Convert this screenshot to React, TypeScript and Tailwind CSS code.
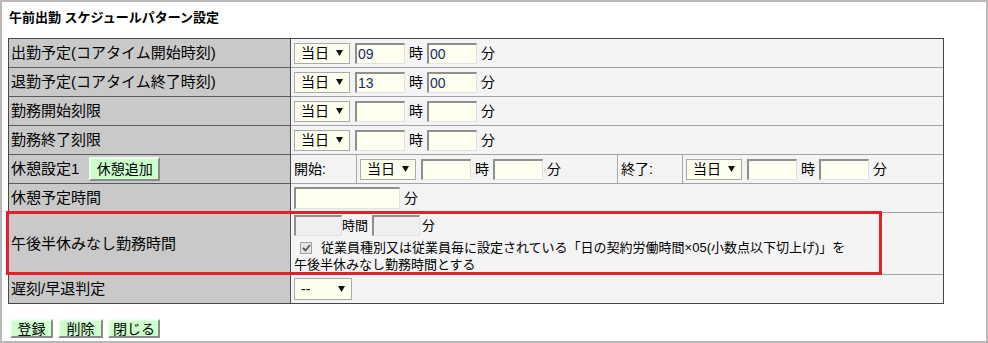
import React from 'react';

// Annotated settings form: "午前出勤 スケジュールパターン設定"

const Arrow = () => (
  <svg width="7" height="6" viewBox="0 0 7 6" className="shrink-0">
    <polygon points="0,0 7,0 3.5,6" fill="#111" />
  </svg>
);

const Sel = ({ text, className = '' }: { text: string; className?: string }) => (
  <div
    className={`flex items-center justify-between h-[21px] border border-[#a9a9a9] bg-[#fefeec] pl-[6px] pr-[6px] text-[14px] leading-[18px] text-black ${className}`}
  >
    <span>{text}</span>
    <Arrow />
  </div>
);

const Inp = ({
  value = '',
  className = '',
  disabled = false,
}: {
  value?: string;
  className?: string;
  disabled?: boolean;
}) => (
  <input
    readOnly
    value={value}
    className={`h-[21px] border-t-2 border-l-2 border-r border-b border-t-[#8f8f8f] border-l-[#8f8f8f] border-r-[#e2e2e2] border-b-[#e2e2e2] pl-[1px] text-[14px] leading-[17px] text-[#1b2a66] outline-none font-['Liberation_Sans',sans-serif] ${
      disabled ? 'bg-[#efefef]' : 'bg-[#fffff0]'
    } ${className}`}
  />
);

const GreenBtn = ({ text, className = '' }: { text: string; className?: string }) => (
  <button
    className={`flex items-center justify-center border-2 border-t-[#efffef] border-l-[#efffef] border-b-[#8a8a8a] border-r-[#8a8a8a] bg-[#ccffcc] text-[14px] leading-[16px] text-black ${className}`}
  >
    {text}
  </button>
);

// 当日 ▼ [hh] 時 [mm] 分
const TimeInputs = ({ hh = '', mm = '' }: { hh?: string; mm?: string }) => (
  <div className="flex items-center text-[14px]">
    <Sel text="当日" className="w-[56px]" />
    <Inp value={hh} className="w-[50px] ml-[5px]" />
    <span className="mx-[4px] leading-[18px]">時</span>
    <Inp value={mm} className="w-[50px]" />
    <span className="ml-[4px] leading-[18px]">分</span>
  </div>
);

const labelCls =
  'w-[282px] shrink-0 flex items-center pl-[2px] bg-[#c9c9c9] border-r border-r-[#4d4d4d] text-[15px] leading-[18px]';
const valueCls = 'flex-1 min-w-0 flex items-center pl-[3px] bg-[#f4f4f4]';

const TIME_ROWS = [
  { label: '出勤予定(コアタイム開始時刻)', hh: '09', mm: '00' },
  { label: '退勤予定(コアタイム終了時刻)', hh: '13', mm: '00' },
  { label: '勤務開始刻限', hh: '', mm: '' },
  { label: '勤務終了刻限', hh: '', mm: '' },
];

const App: React.FC = () => {
  return (
    <div className="w-[988px] h-[343px] border-2 border-[#bbb7b8] bg-white pl-[6px] pt-[6px] text-black font-['Liberation_Sans','Noto_Sans_CJK_JP',sans-serif] overflow-hidden">
      <div className="text-[13px] font-bold leading-[19px] mb-[11px] pl-[1px]">
        午前出勤 スケジュールパターン設定
      </div>

      {/* form table */}
      <div className="w-[936px] border border-[#474747] flex flex-col">
        {TIME_ROWS.map((r) => (
          <div key={r.label} className="flex h-[29px]">
            <div className={`${labelCls} border-b border-b-[#5a5a5a]`}>{r.label}</div>
            <div className={`${valueCls} border-b border-b-[#a3a3a3]`}>
              <TimeInputs hh={r.hh} mm={r.mm} />
            </div>
          </div>
        ))}

        {/* 休憩設定1 */}
        <div className="flex h-[29px]">
          <div className={`${labelCls} border-b border-b-[#5a5a5a]`}>
            <span>休憩設定1</span>
            <GreenBtn text="休憩追加" className="w-[71px] h-[24px] ml-[10px]" />
          </div>
          <div className="flex-1 flex bg-[#f4f4f4] border-b border-b-[#a3a3a3] text-[14px]">
            <div className="w-[66px] flex items-center pl-[3px] border-r border-r-[#a8a8a8]">開始:</div>
            <div className="w-[261px] flex items-center pl-[3px] border-r border-r-[#a8a8a8]">
              <TimeInputs />
            </div>
            <div className="w-[65px] flex items-center pl-[3px] border-r border-r-[#a8a8a8]">終了:</div>
            <div className="flex-1 flex items-center pl-[3px]">
              <TimeInputs />
            </div>
          </div>
        </div>

        {/* 休憩予定時間 */}
        <div className="flex h-[29px]">
          <div className={`${labelCls} border-b border-b-[#5a5a5a]`}>休憩予定時間</div>
          <div className={`${valueCls} border-b border-b-[#a3a3a3] text-[14px]`}>
            <Inp className="w-[106px] h-[22px]" />
            <span className="ml-[4px] leading-[18px]">分</span>
          </div>
        </div>

        {/* 午後半休みなし勤務時間 (red annotation box over it) */}
        <div className="relative flex h-[62px]">
          <div className={`${labelCls} border-b border-b-[#5a5a5a]`}>午後半休みなし勤務時間</div>
          <div className="flex-1 flex flex-col pl-[3px] pt-[2px] bg-[#f4f4f4] border-b border-b-[#a3a3a3]">
            <div className="flex items-center h-[20px] text-[13px]">
              <Inp disabled className="w-[48px] h-[19px]" />
              <span className="leading-[17px]">時間</span>
              <Inp disabled className="w-[48px] h-[19px] ml-[4px]" />
              <span className="ml-[2px] leading-[17px]">分</span>
            </div>
            <div className="mt-[4px] text-[13px] leading-[17px]">
              <div className="flex items-center">
                <span className="ml-[6px] mr-[9px] w-[12px] h-[12px] border border-[#a0a0a0] bg-[#e4e4e4] flex items-center justify-center">
                  <svg width="9" height="8" viewBox="0 0 9 8">
                    <path d="M1 4 L3.5 6.5 L8 1" stroke="#555" strokeWidth="1.8" fill="none" />
                  </svg>
                </span>
                <span>
                  従業員種別又は従業員毎に設定されている「日の契約労働時間×05(小数点以下切上げ)」を
                </span>
              </div>
              <div>午後半休みなし勤務時間とする</div>
            </div>
          </div>
          <div className="absolute -top-[2px] -left-[3px] w-[876px] h-[64px] border-[3px] border-[#e4202a] pointer-events-none" />
        </div>

        {/* 遅刻/早退判定 */}
        <div className="flex h-[28px]">
          <div className={labelCls}>遅刻/早退判定</div>
          <div className={valueCls}>
            <Sel text="--" className="w-[58px] h-[22px]" />
          </div>
        </div>
      </div>

      <div className="flex gap-[5px] mt-[15px] pl-[2px]">
        <GreenBtn text="登録" className="w-[43px] h-[19px]" />
        <GreenBtn text="削除" className="w-[45px] h-[19px]" />
        <GreenBtn text="閉じる" className="w-[52px] h-[19px]" />
      </div>
    </div>
  );
};

export default App;
